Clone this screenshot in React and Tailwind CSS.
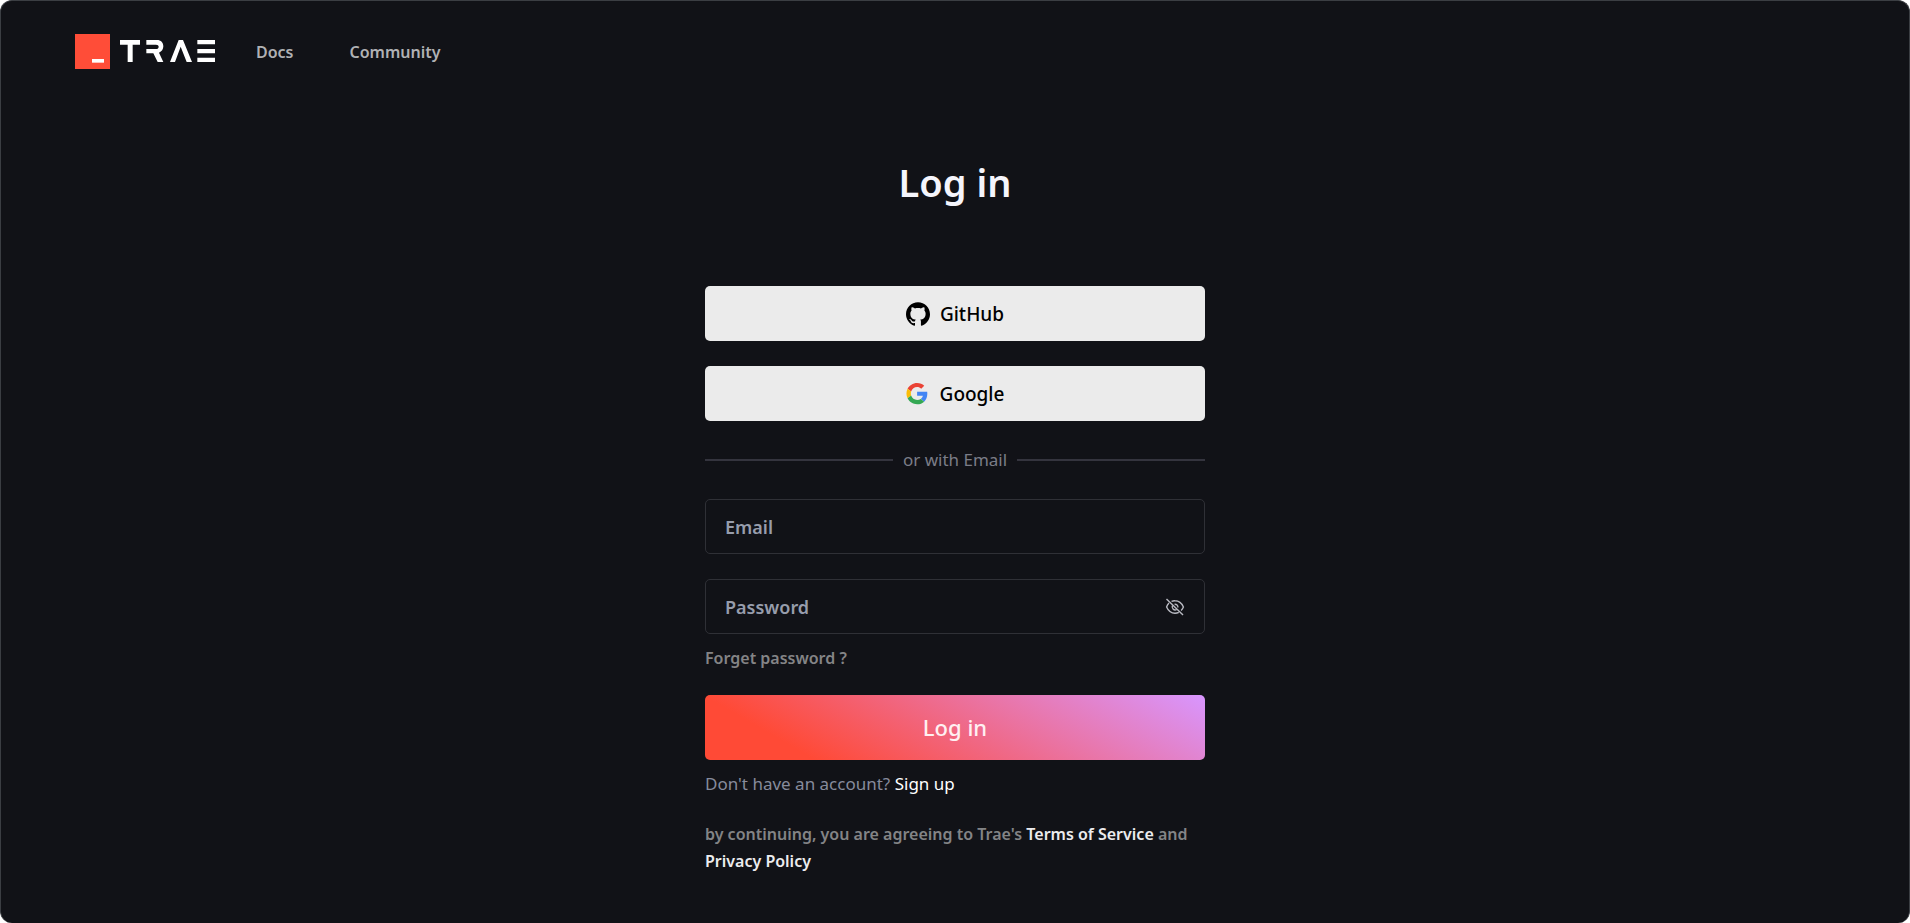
import { useState } from 'react';
import { SiGithub } from 'react-icons/si';

const TraeLogo = () => (
  <svg width="140" height="35" viewBox="0 0 420 105" role="img" aria-label="Trae">
    <rect width="105" height="105" fill="#ff4d38" />
    <rect x="51" y="75" width="36" height="11" fill="#fff" />
    <g fill="#fff">
      <path d="M135 18h60v14h-22v52h-15V32h-23z" />
      <path d="M214 18h32c12 0 19 8 19 19 0 9-5 16-13 19l13 28h-17L235 58h-21V45h29c5 0 8-3 8-7s-3-6-8-6h-29z" />
      <path d="M311 18h13l27 66h-16l-18-46-17 46h-15z" />
      <path d="M367 18h53v13h-53zM367 45h53v13h-53zM367 71h53v13h-53z" />
    </g>
  </svg>
);

const GoogleIcon = () => (
  <svg width="24" height="24" viewBox="-1 -2 54 54" aria-hidden="true">
    <path fill="#EA4335" d="M24 9.5c3.54 0 6.71 1.22 9.21 3.6l6.85-6.85C35.9 2.38 30.47 0 24 0 14.62 0 6.51 5.38 2.56 13.22l7.98 6.19C12.43 13.72 17.74 9.5 24 9.5z" />
    <path fill="#4285F4" d="M46.98 24.55c0-1.57-.15-3.09-.38-4.55H24v9.02h12.94c-.58 2.96-2.26 5.48-4.78 7.18l7.73 6c4.51-4.18 7.09-10.36 7.09-17.65z" />
    <path fill="#FBBC05" d="M10.53 28.59c-.48-1.45-.76-2.99-.76-4.59s.27-3.14.76-4.59l-7.98-6.19C.92 16.46 0 20.12 0 24c0 3.88.92 7.54 2.56 10.78l7.97-6.19z" />
    <path fill="#34A853" d="M24 48c6.48 0 11.93-2.13 15.89-5.81l-7.73-6c-2.15 1.45-4.92 2.3-8.16 2.3-6.26 0-11.57-4.22-13.47-9.91l-7.98 6.19C6.51 42.62 14.62 48 24 48z" />
  </svg>
);

const EyeOffIcon = () => (
  <svg width="20" height="20" viewBox="0 0 20 20" fill="none" stroke="currentColor" strokeWidth="1.4" aria-hidden="true">
    <path d="M1.5 2l16.5 16" />
    <path d="M6.5 4.4A8.5 8.5 0 0 1 10 3.8c4 0 6.8 2.5 8.4 6.2a10 10 0 0 1-2.3 3.4" />
    <path d="M4 6A10 10 0 0 0 1.6 10c1.6 3.7 4.4 6.2 8.4 6.2a8.500 8.500 0 0 0 3.800-.9" />
    <path d="M7.6 8.400a3 3 0 0 0 4.100 4.100M9.600 7.200a3 3 0 0 1 3.300 3.300" />
  </svg>
);

const socialButton =
  'flex h-[55px] w-full items-center justify-center gap-2.5 rounded-[5px] bg-[#ebebeb] text-[19px] font-medium text-black';
const textField =
  'h-[55px] w-full rounded-[5px] border border-[#2f3036] bg-transparent px-[19px] text-[18px] font-semibold text-white outline-none placeholder:text-[#979dac]';

const App = () => {
  const [email, setEmail] = useState('');
  const [password, setPassword] = useState('');
  const [showPassword, setShowPassword] = useState(false);

  return (
    <div className="bg-white font-['Noto_Sans',sans-serif]">
      <div className="min-h-screen rounded-xl border border-b-0 border-[#3b3e43] bg-[#111217]">
        <header className="flex h-[101px] items-center pl-[74px]">
          <a href="#" aria-label="Trae home">
            <TraeLogo />
          </a>
          <nav className="ml-[41px] flex gap-14 text-[16px] font-semibold text-[#b0b1b4]">
            <a href="#docs">Docs</a>
            <a href="#community">Community</a>
          </nav>
        </header>

        <main className="mx-auto w-full max-w-[500px] pt-[50px]">
          <h1 className="text-center text-[38px] leading-[60px] font-semibold text-[#f5f5fc]">Log in</h1>

          <div className="mt-[74px] flex flex-col gap-[25px]">
            <button type="button" className={socialButton}>
              <SiGithub size={24} aria-hidden="true" />
              <span className="pt-0.5">GitHub</span>
            </button>
            <button type="button" className={socialButton}>
              <GoogleIcon />
              <span className="pt-0.5">Google</span>
            </button>
          </div>

          <div className="flex h-[78px] items-center gap-2.5 text-[17px] text-[#7b7d87]">
            <span className="h-0.5 flex-1 bg-[#34343e]" />
            or with Email
            <span className="h-0.5 flex-1 bg-[#34343e]" />
          </div>

          <form onSubmit={(e) => e.preventDefault()}>
            <input
              type="email"
              aria-label="Email"
              placeholder="Email"
              value={email}
              onChange={(e) => setEmail(e.target.value)}
              className={textField}
            />
            <div className="relative mt-[25px]">
              <input
                type={showPassword ? 'text' : 'password'}
                aria-label="Password"
                placeholder="Password"
                value={password}
                onChange={(e) => setPassword(e.target.value)}
                className={textField}
              />
              <button
                type="button"
                aria-label="Show password"
                onClick={() => setShowPassword(!showPassword)}
                className="absolute inset-y-0 right-5 flex items-center text-[#b9bac2]"
              >
                <EyeOffIcon />
              </button>
            </div>
            <a href="#forget" className="mt-2.5 block text-[16px] leading-7 font-semibold text-[#848486]">
              Forget password ?
            </a>
            <button
              type="submit"
              className="mt-[23px] h-[65px] w-full rounded-[5px] bg-[linear-gradient(30deg,#ff4a36_18%,#d896ff_100%)] text-[22px] font-medium text-[#fff0f2]"
            >
              Log in
            </button>
          </form>

          <p className="mt-2.5 text-[17px] leading-7 text-[#868b9c]">
            Don't have an account? <a href="#signup" className="text-white">Sign up</a>
          </p>
          <p className="mt-[23px] text-[16px] leading-[27px] font-semibold text-[#838486]">
            by continuing, you are agreeing to Trae's{' '}
            <a href="#terms" className="text-[#ececee]">Terms of Service</a> and{' '}
            <a href="#privacy" className="text-[#ececee]">Privacy Policy</a>
          </p>
        </main>
      </div>
    </div>
  );
};

export default App;
